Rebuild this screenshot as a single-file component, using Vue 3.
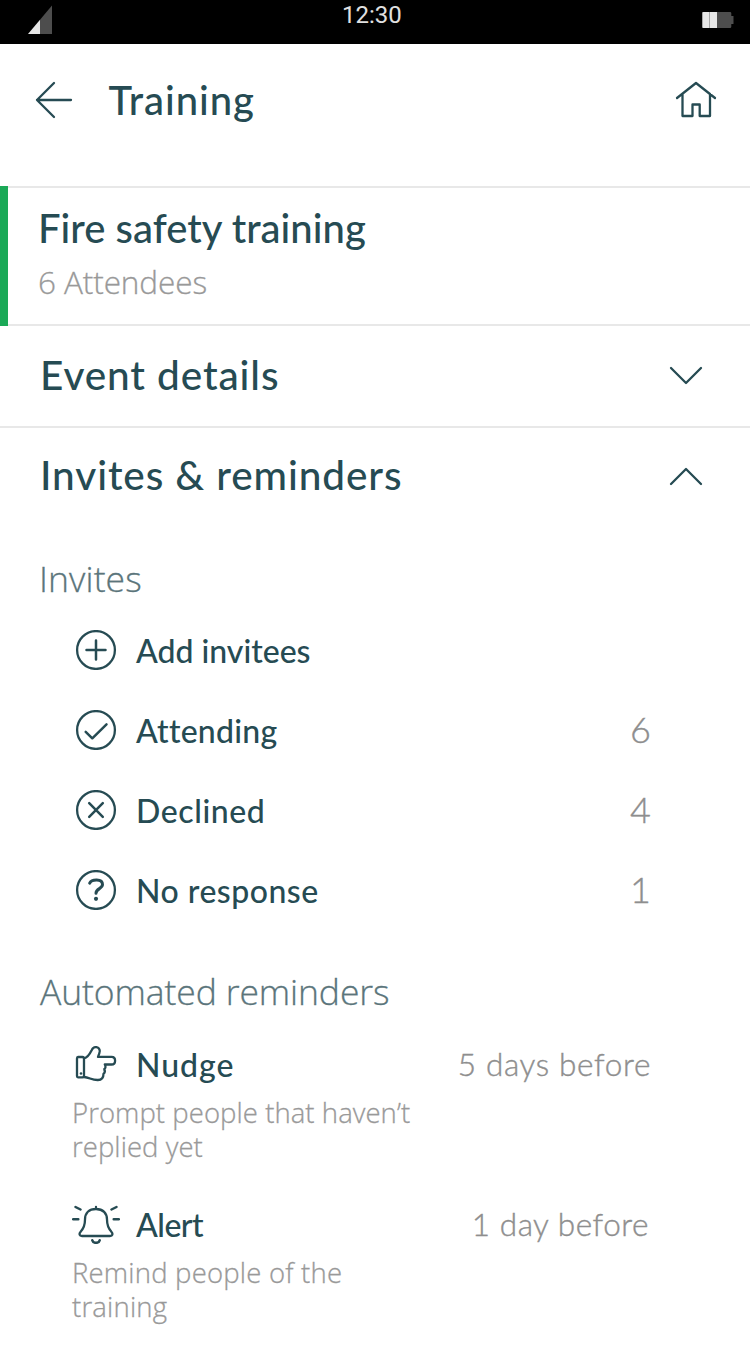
<script setup>
const invites = [
  { key: 'add', label: 'Add invitees', count: '' },
  { key: 'attending', label: 'Attending', count: '6' },
  { key: 'declined', label: 'Declined', count: '4' },
  { key: 'noresponse', label: 'No response', count: '1' },
]
const reminders = [
  { key: 'nudge', label: 'Nudge', when: '5 days before', lines: ['Prompt people that haven’t', 'replied yet'] },
  { key: 'alert', label: 'Alert', when: '1 day before', lines: ['Remind people of the', 'training'] },
]
</script>

<template>
  <div class="screen">
    <div class="status">
      <svg class="signal" width="24" height="29" viewBox="0 0 24 29">
        <path d="M0 29L12 14.7V29Z" fill="#e6e6e6" />
        <path d="M12 14.7L24 .5V29H12Z" fill="#4d4d4d" />
      </svg>
      <span class="clock">12:30</span>
      <svg class="battery" width="32" height="16" viewBox="0 0 32 16">
        <path d="M1.5 0H28a1.3 1.3 0 0 1 1.3 1.3V4h2.2v8h-2.2v2.7A1.3 1.3 0 0 1 28 16H1.5A1.3 1.3 0 0 1 .2 14.7V1.3A1.3 1.3 0 0 1 1.5 0Z" fill="#4d4d4d" />
        <path d="M1.5 0H15v16H1.5A1.3 1.3 0 0 1 .2 14.7V1.3A1.3 1.3 0 0 1 1.5 0Z" fill="#e6e6e6" />
        <path d="M.5 1V15M7.5 0V16" stroke="#a6a6a6" stroke-width="1" />
      </svg>
    </div>

    <header class="header">
      <svg class="stroke" width="40" height="40" viewBox="0 0 40 40">
        <path d="M3 20H37M20 3L3 20L20 37" />
      </svg>
      <h1 class="title">Training</h1>
      <svg class="stroke" width="44" height="40" viewBox="0 0 44 40">
        <path d="M3 18L22 3L41 18M8.500 14V36H18.500V24.500H25.700V36H36V14" />
      </svg>
    </header>

    <section class="event">
      <h2 class="event-name">Fire safety training</h2>
      <p class="attendees">6 Attendees</p>
    </section>

    <section class="panel bordered">
      <h2 class="panel-title">Event details</h2>
      <svg class="stroke" width="36" height="20" viewBox="0 0 36 20"><path d="M3 2L18 17L33 2" /></svg>
    </section>
    <section class="panel open">
      <h2 class="panel-title">Invites &amp; reminders</h2>
      <svg class="stroke" width="36" height="20" viewBox="0 0 36 20"><path d="M3 18L18 3L33 18" /></svg>
    </section>

    <h3 class="sub invites-title">Invites</h3>
    <ul class="list">
      <li v-for="row in invites" :key="row.key" class="row">
        <svg class="stroke icon" width="48" height="40" viewBox="0 0 48 40">
          <circle cx="24" cy="20" r="18.9" />
          <path v-if="row.key === 'add'" class="mark" d="M14.500 20H33.500M24 10.500V29.500" />
          <path v-else-if="row.key === 'attending'" class="mark" d="M13.700 21.800L20.300 28.300L34.500 14.300" />
          <path v-else-if="row.key === 'declined'" class="mark" d="M17.200 13.200L30.800 26.800M30.800 13.200L17.200 26.800" />
          <template v-else>
            <path class="mark bold" d="M17.700 13.100C19.500 9.200 30.500 8.300 30.500 14.600C30.500 19 24 18.300 24 23.300" />
            <circle class="dot" cx="24" cy="28.8" r="2.1" />
          </template>
        </svg>
        <span class="label" :class="row.key">{{ row.label }}</span>
        <span class="count">{{ row.count }}</span>
      </li>
    </ul>

    <h3 class="sub auto-title">Automated reminders</h3>
    <article v-for="item in reminders" :key="item.key" class="reminder">
      <div class="reminder-head">
        <svg v-if="item.key === 'nudge'" class="stroke icon" width="48" height="40" viewBox="0 0 48 40">
          <path d="M6 13H10.500Q12 13 12 14.500V32Q12 33.300 10.500 33.300H6Q5 33.300 5 32V14.500Q5 13 6 13Z" />
          <path d="M12 14.500C16 13.500 17.800 10 19.800 6C20.800 3.600 22.500 2.800 24.500 3.200C27.500 3.800 28.500 6.500 27.300 9.300L26 12.800H39.500C44.300 12.800 44.300 20.500 39.500 20.500H32.800C34 22.500 33.500 24.500 32.300 25C33.200 27.500 32.500 29.200 31.500 29.800C31.500 33.500 29.500 36 26 36C19.500 36.200 17.500 33.300 12 33" />
          <circle class="dot" cx="9" cy="29.500" r="1.300" />
        </svg>
        <svg v-else class="stroke icon" width="48" height="40" viewBox="0 0 48 40">
          <path d="M24 3V5M24 5C17 5 13 9.300 13 15.500C13 22 11.500 24.500 8.800 27.500C6.500 30 7.500 32 10 32H38C40.500 32 41.500 30 39.200 27.500C36.500 24.500 35 22 35 15.500C35 9.300 31 5 24 5Z" />
          <path class="mark" d="M20.300 36.300C21.300 39.700 26.700 39.700 27.700 36.300M1.200 15.200H6.300M3.500 3L8.500 5.500M41.700 15.200H46.800M39.500 5.500L44.500 3" />
        </svg>
        <span class="label" :class="item.key">{{ item.label }}</span>
        <span class="when" :class="item.key">{{ item.when }}</span>
      </div>
      <p class="desc" :class="item.key"><span v-for="line in item.lines" :key="line">{{ line }}</span></p>
    </article>
  </div>
</template>

<style>
body { margin: 0; background: #fff; }
</style>

<style scoped>
.screen { box-sizing: border-box; width: 750px; height: 1354px; overflow: hidden; background: #fff; color: #264b53; font-family: Lato, "Open Sans", sans-serif; }
h1, h2, h3, p, ul { margin: 0; padding: 0; font-weight: 500; }
ul { list-style: none; }
svg { display: block; flex: none; }

.status { display: flex; align-items: flex-start; height: 44px; background: #000; }
.signal { margin: 5px 0 0 28px; }
.clock { width: 62px; margin: 0 auto 0 290px; color: #e0e0e0; font: 400 24px/30px Roboto, sans-serif; }
.battery { margin: 12px 16px 0 0; }

.stroke { fill: none; stroke: #264b53; stroke-width: 2.3; stroke-linecap: round; stroke-linejoin: round; }
.mark { stroke-width: 2.5; }
.bold { stroke-width: 3; }
.dot { fill: #264b53; stroke: none; }

.header { display: flex; align-items: center; box-sizing: border-box; height: 142px; padding: 0 32px 30px 34px; }
.title { flex: 1; margin: -1px 0 0 34.5px; font-size: 40px; line-height: 48px; letter-spacing: .93px; }

.event { box-sizing: border-box; height: 140px; padding: 18px 0 0 38px; background: linear-gradient(#1ba957, #1ba957) left / 8px 100% no-repeat, linear-gradient(#e8e8e8, #e8e8e8) top / 100% 2px no-repeat, linear-gradient(#e8e8e8, #e8e8e8) bottom / 100% 2px no-repeat; }
.event-name { font-size: 40px; line-height: 48px; letter-spacing: .03px; }
.attendees { margin-top: 10px; color: #999; font-family: "Open Sans", sans-serif; font-size: 31.5px; font-weight: 300; line-height: 40px; letter-spacing: -.1px; -webkit-text-stroke: .3px #999; }

.panel { display: flex; align-items: center; justify-content: space-between; height: 100px; padding: 0 46px 0 40px; }
.bordered { border-bottom: 2px solid #e8e8e8; }
.open { height: 96px; }
.panel-title { margin-top: -3px; font-size: 40.5px; line-height: 48px; letter-spacing: .9px; }

.sub { color: #5b757b; font-family: "Open Sans", sans-serif; font-size: 35.5px; font-weight: 300; line-height: 40px; -webkit-text-stroke: .3px #5b757b; }
.invites-title { margin: 34px 0 12px 39px; letter-spacing: .1px; }
.auto-title { margin: 41px 0 33px 40px; letter-spacing: -.11px; }

.row { display: flex; align-items: center; height: 80px; padding: 0 99px 0 72px; }
.label { flex: 1; margin: 1px 0 0 16px; font-size: 32px; font-weight: 500; line-height: 40px; }
.attending { letter-spacing: .25px; }
.declined { letter-spacing: .6px; }
.noresponse { letter-spacing: .5px; }
.count { margin-top: -3px; color: #8e8e8e; font-size: 36px; font-weight: 300; line-height: 44px; -webkit-text-stroke: .4px #8e8e8e; }

.reminder { height: 160px; padding: 0 99px 0 72px; }
.reminder-head { display: flex; align-items: center; height: 40px; }
.label.nudge { letter-spacing: 1px; }
.label.alert { letter-spacing: -.5px; }
.when { color: #8e8e8e; font-size: 31.5px; font-weight: 300; line-height: 40px; -webkit-text-stroke: .4px #8e8e8e; }
.when.nudge { letter-spacing: .65px; }
.when.alert { margin-right: 2px; letter-spacing: .53px; }
.desc { margin-top: 12px; color: #999; font-family: "Open Sans", sans-serif; font-size: 27.5px; font-weight: 300; line-height: 34px; -webkit-text-stroke: .3px #999; }
.desc span { display: block; }
.desc.nudge { letter-spacing: .06px; }
.desc.alert { letter-spacing: .2px; }
</style>
